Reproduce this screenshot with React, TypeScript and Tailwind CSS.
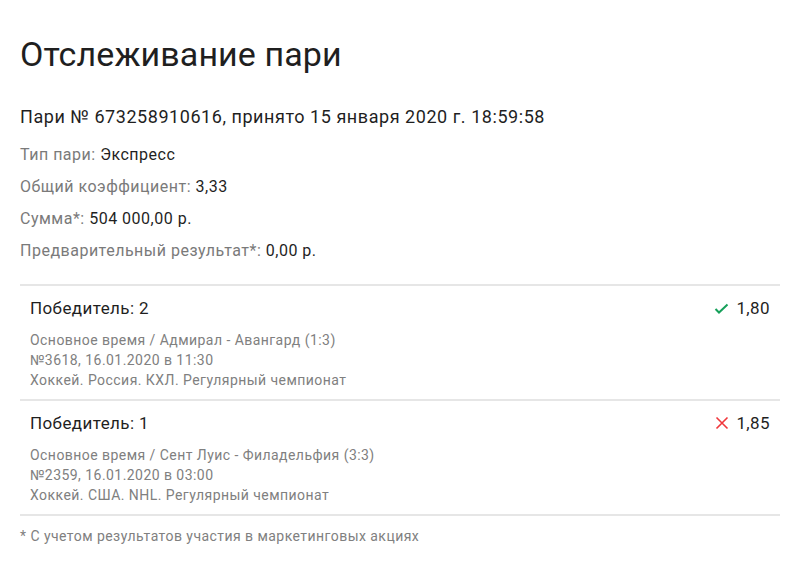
import React from 'react';

const info = [
  { label: 'Тип пари:', value: 'Экспресс' },
  { label: 'Общий коэффициент:', value: '3,33' },
  { label: 'Сумма*:', value: '504 000,00 р.' },
  { label: 'Предварительный результат*:', value: '0,00 р.' },
];

const events = [
  {
    title: 'Победитель: 2',
    won: true,
    odds: '1,80',
    lines: [
      'Основное время / Адмирал - Авангард (1:3)',
      '№3618, 16.01.2020 в 11:30',
      'Хоккей. Россия. КХЛ. Регулярный чемпионат',
    ],
  },
  {
    title: 'Победитель: 1',
    won: false,
    odds: '1,85',
    lines: [
      'Основное время / Сент Луис - Филадельфия (3:3)',
      '№2359, 16.01.2020 в 03:00',
      'Хоккей. США. NHL. Регулярный чемпионат',
    ],
  },
];

const Check = () => (
  <svg width="15" height="15" viewBox="0 0 15 15" fill="none">
    <path d="M1.5 8l3.5 3.5 8.5-8" stroke="#16a05a" strokeWidth="2" />
  </svg>
);

const Cross = () => (
  <svg width="14" height="14" viewBox="0 0 14 14" fill="none">
    <path d="M1.5 1.5l11 11M12.5 1.5l-11 11" stroke="#f0373c" strokeWidth="1.6" />
  </svg>
);

export default function App() {
  return (
    <div className="w-[800px] h-[568px] bg-white px-5 pt-[33px] text-[#1f1f1f] font-['Roboto','Liberation_Sans',sans-serif]">
      <h1 className="text-[34px] leading-[42px] font-normal tracking-[0.1px]">Отслеживание пари</h1>

      <div className="mt-[31px] text-[18px] leading-[22px] tracking-[0.55px]">
        Пари № 673258910616, принято 15 января 2020 г. 18:59:58
      </div>

      <div className="mt-[17px] flex flex-col gap-[12px] text-[16px] leading-[20px] tracking-[0.5px]">
        {info.map((row) => (
          <div key={row.label}>
            <span className="text-[#7a7a7a]">{row.label}</span> <span>{row.value}</span>
          </div>
        ))}
      </div>

      <div className="mt-[23px] border-t-2 border-[#e6e6e6]">
        {events.map((ev) => (
          <div key={ev.title} className="border-b-2 border-[#e6e6e6] px-[10px] pt-[11px] pb-[9px]">
            <div className="flex items-center justify-between text-[17px] leading-[22px] tracking-[0.4px]">
              <span>{ev.title}</span>
              <span className="flex items-center gap-[7px]">
                {ev.won ? <Check /> : <Cross />}
                <span>{ev.odds}</span>
              </span>
            </div>
            <div className="mt-[11px] text-[14px] leading-[20px] tracking-[0.45px] text-[#808080]">
              {ev.lines.map((l) => (
                <div key={l}>{l}</div>
              ))}
            </div>
          </div>
        ))}
      </div>

      <div className="mt-[10px] text-[14px] leading-[20px] tracking-[0.45px] text-[#808080]">
        * С учетом результатов участия в маркетинговых акциях
      </div>
    </div>
  );
}
